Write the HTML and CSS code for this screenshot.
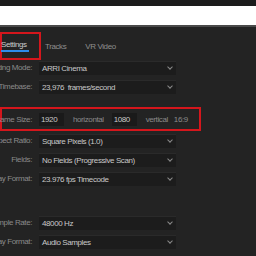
FILE: index.html
```html
<!DOCTYPE html>
<html>
<head>
<meta charset="utf-8">
<title>Sequence Settings</title>
<link rel="stylesheet" href="styles.css">
</head>
<body>
<div class="topbar"></div>
<div class="whitebar"></div>
<div class="divider"></div>

<div class="tabs">
    <div class="tab tab-active"><span class="tab-label">Settings</span></div>
    <div class="tab">Tracks</div>
    <div class="tab">VR Video</div>
</div>

<div class="form">
    <div class="row">
        <div class="label"><span>Editing Mode:</span></div>
        <div class="select">ARRI Cinema<span class="arrow"></span></div>
    </div>
    <div class="row">
        <div class="label"><span>Timebase:</span></div>
        <div class="select">23,976&nbsp; frames/second<span class="arrow"></span></div>
    </div>

    <div class="highlight">
        <div class="row row-frame">
            <div class="label"><span>Frame Size:</span></div>
            <div class="num">1920</div>
            <span class="unit">horizontal</span>
            <div class="num">1080</div>
            <span class="unit">vertical</span>
            <span class="ratio">16:9</span>
        </div>
    </div>

    <div class="row">
        <div class="label"><span>Pixel Aspect Ratio:</span></div>
        <div class="select">Square Pixels (1.0)<span class="arrow"></span></div>
    </div>
    <div class="row">
        <div class="label"><span>Fields:</span></div>
        <div class="select">No Fields (Progressive Scan)<span class="arrow"></span></div>
    </div>
    <div class="row">
        <div class="label"><span>Display Format:</span></div>
        <div class="select">23.976 fps Timecode<span class="arrow"></span></div>
    </div>

    <div class="gap"></div>

    <div class="row">
        <div class="label"><span>Sample Rate:</span></div>
        <div class="select">48000 Hz<span class="arrow"></span></div>
    </div>
    <div class="row">
        <div class="label"><span>Display Format:</span></div>
        <div class="select">Audio Samples<span class="arrow"></span></div>
    </div>
</div>
</body>
</html>
```

FILE: styles.css
```css
html, body {
    margin: 0;
    padding: 0;
    background-color: #232323;
    font-family: "Liberation Sans", Arial, sans-serif;
    font-size: 8px;
    letter-spacing: -0.4px;
    color: #9b9b9b;
    overflow: hidden;
}

.topbar {
    height: 6px;
    background-color: #1c1c1c;
}

.whitebar {
    height: 19px;
    background-color: #ffffff;
}

.divider {
    height: 2px;
    background-color: #4a4a4a;
}

.tabs {
    display: flex;
    align-items: center;
    margin-top: 5px;
    height: 28px;
}

.tab {
    color: #8e8e8e;
    margin-right: 19px;
}

.tab-active {
    box-sizing: border-box;
    width: 41px;
    height: 28px;
    border: 2px solid #d4161c;
    display: flex;
    align-items: center;
    margin-right: 4px;
}

.tab-label {
    color: #cccccc;
    padding-bottom: 1px;
    border-bottom: 2px solid #2d8ceb;
    margin-left: -1px;
    padding-right: 2px;
}

.form {
    margin-top: -2px;
}

.row {
    display: flex;
    align-items: center;
    height: 19px;
}

.label {
    width: 32px;
    display: flex;
    justify-content: flex-end;
    white-space: nowrap;
    margin-right: 7px;
    color: #8a8a8a;
}

.select {
    position: relative;
    box-sizing: border-box;
    width: 137px;
    height: 14px;
    line-height: 14px;
    padding-left: 3px;
    background-color: #1c1c1c;
    border-top: 1px solid #2a2a2a;
    color: #c8c8c8;
    white-space: nowrap;
}

.arrow {
    position: absolute;
    right: 4px;
    top: 3px;
    width: 3px;
    height: 3px;
    border-right: 1px solid #8a8a8a;
    border-bottom: 1px solid #8a8a8a;
    transform: rotate(45deg);
}

.highlight {
    box-sizing: border-box;
    width: 201px;
    height: 24px;
    margin-top: 11px;
    border: 2px solid #d4161c;
    display: flex;
    align-items: center;
}

.row-frame {
    margin-left: -2px;
}

.num {
    box-sizing: border-box;
    width: 25px;
    height: 13px;
    line-height: 13px;
    padding-left: 2px;
    background-color: #1a1a1a;
    color: #c8c8c8;
}

.unit {
    margin: 0 8px 0 9px;
    color: #8a8a8a;
}

.ratio {
    color: #8a8a8a;
    margin-left: -2px;
}

.gap {
    height: 25px;
}
```
